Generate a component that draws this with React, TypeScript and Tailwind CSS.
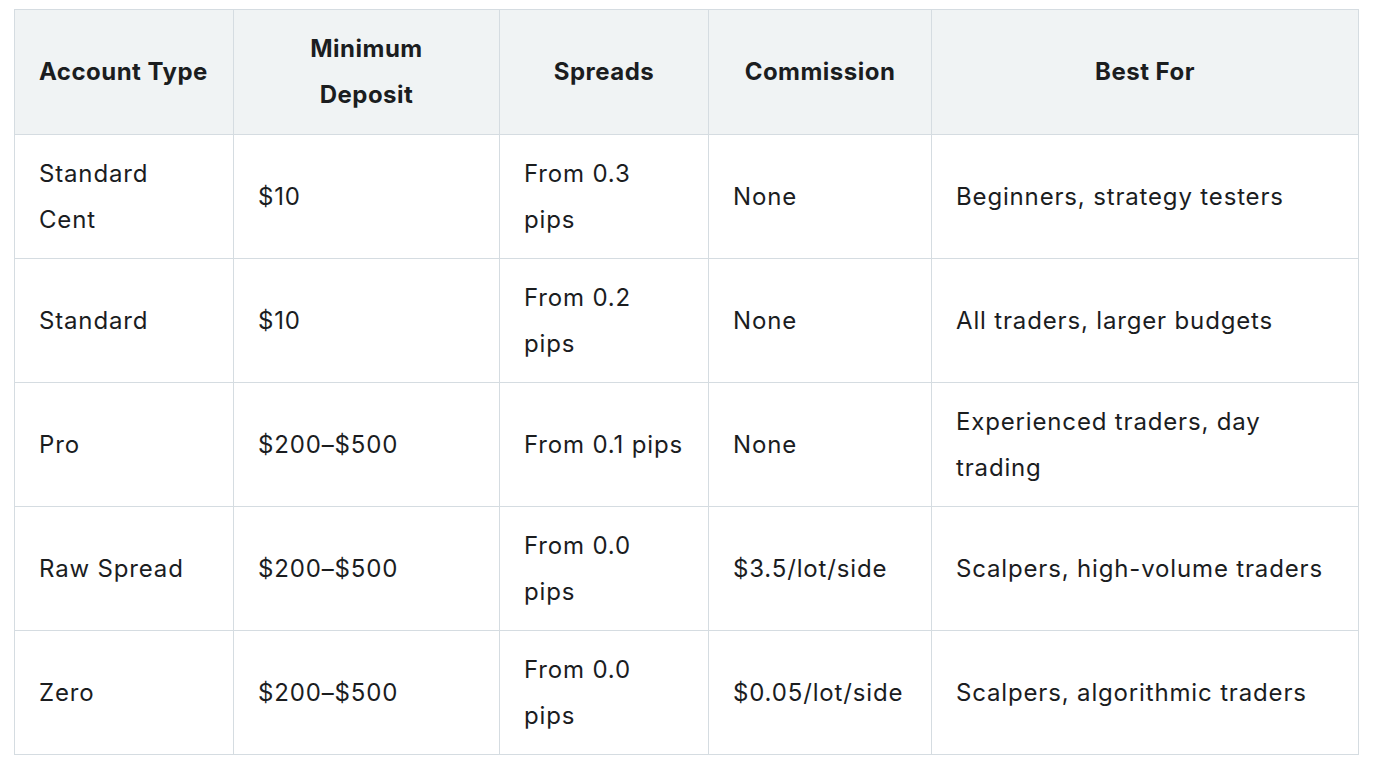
import React from "react";

const rows = [
  ["Standard Cent", "$10", "From 0.3 pips", "None", "Beginners, strategy testers"],
  ["Standard", "$10", "From 0.2 pips", "None", "All traders, larger budgets"],
  ["Pro", "$200–$500", "From 0.1 pips", "None", "Experienced traders, day trading"],
  ["Raw Spread", "$200–$500", "From 0.0 pips", "$3.5/lot/side", "Scalpers, high-volume traders"],
  ["Zero", "$200–$500", "From 0.0 pips", "$0.05/lot/side", "Scalpers, algorithmic traders"],
];

const headers = ["Account Type", "Minimum Deposit", "Spreads", "Commission", "Best For"];
const widths = ["w-[219px]", "w-[266px]", "w-[209px]", "w-[223px]", "w-[427px]"];

export default function App() {
  return (
    <div className="min-h-screen bg-white pt-[9px] pl-[14px] font-['Inter',sans-serif] text-[#1b1d1f]">
      <table className="w-[1344px] table-fixed border-collapse text-[24px] leading-[46px] tracking-[0.035em]">
        <colgroup>
          {widths.map((w, i) => (
            <col key={i} className={w} />
          ))}
        </colgroup>
        <thead>
          <tr className="h-[125px] bg-[#f0f3f4]">
            {headers.map((h, i) => (
              <th
                key={h}
                className={
                  "whitespace-nowrap border border-[#d5dce1] px-6 py-4 align-middle font-bold tracking-[0.02em] " +
                  (i === 0 ? "text-left" : "text-center")
                }
              >
                {h === "Minimum Deposit" ? (
                  <>
                    Minimum
                    <br />
                    Deposit
                  </>
                ) : (
                  h
                )}
              </th>
            ))}
          </tr>
        </thead>
        <tbody>
          {rows.map((r, ri) => (
            <tr key={ri} className="h-[124px]">
              {r.map((c, ci) => (
                <td key={ci} className="border border-[#d5dce1] px-6 py-[15px] align-middle text-left">
                  {c}
                </td>
              ))}
            </tr>
          ))}
        </tbody>
      </table>
    </div>
  );
}
